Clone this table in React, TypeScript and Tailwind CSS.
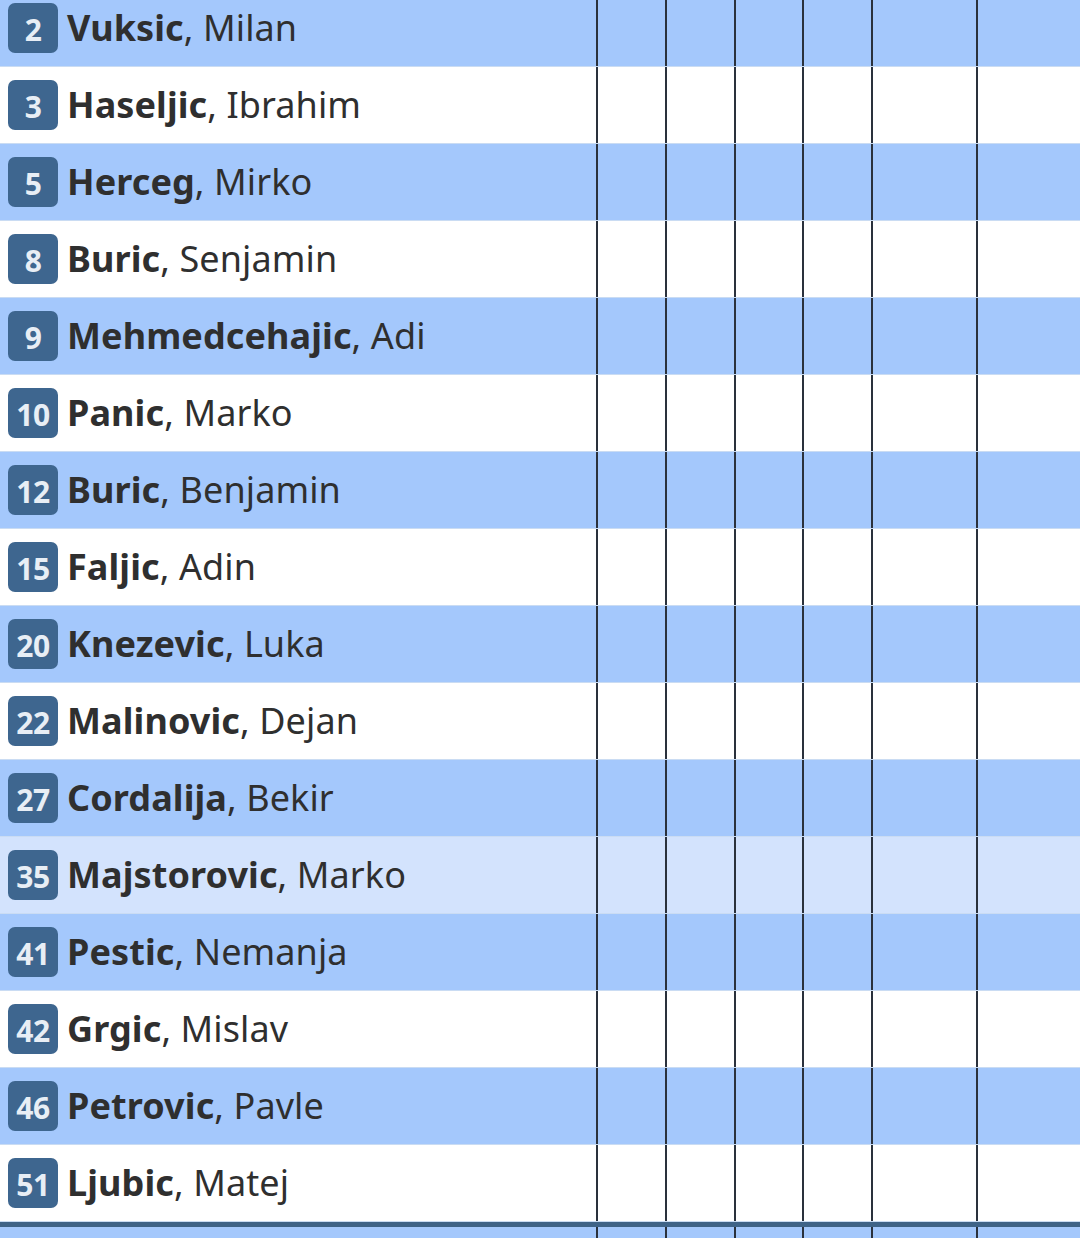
const players = [
  { no: 2, last: "Vuksic", first: "Milan" },
  { no: 3, last: "Haseljic", first: "Ibrahim" },
  { no: 5, last: "Herceg", first: "Mirko" },
  { no: 8, last: "Buric", first: "Senjamin" },
  { no: 9, last: "Mehmedcehajic", first: "Adi" },
  { no: 10, last: "Panic", first: "Marko" },
  { no: 12, last: "Buric", first: "Benjamin" },
  { no: 15, last: "Faljic", first: "Adin" },
  { no: 20, last: "Knezevic", first: "Luka" },
  { no: 22, last: "Malinovic", first: "Dejan" },
  { no: 27, last: "Cordalija", first: "Bekir" },
  { no: 35, last: "Majstorovic", first: "Marko", highlight: true },
  { no: 41, last: "Pestic", first: "Nemanja" },
  { no: 42, last: "Grgic", first: "Mislav" },
  { no: 46, last: "Petrovic", first: "Pavle" },
  { no: 51, last: "Ljubic", first: "Matej" },
];

function Cells() {
  return (
    <>
      <div className="w-[69px] shrink-0 border-l-2 border-[#2a313c]" />
      <div className="w-[69px] shrink-0 border-l-2 border-[#2a313c]" />
      <div className="w-[68px] shrink-0 border-l-2 border-[#2a313c]" />
      <div className="w-[69px] shrink-0 border-l-2 border-[#2a313c]" />
      <div className="w-[105px] shrink-0 border-l-2 border-[#2a313c]" />
      <div className="flex-1 border-l-2 border-[#2a313c]" />
    </>
  );
}

export default function App() {
  return (
    <div className="h-[1238px] w-[1080px] overflow-hidden bg-white font-['Noto_Sans',sans-serif] text-[#2f2f2f]">
      <div className="mt-[-10px] flex flex-col">
        {players.map((p, i) => {
          const bg = p.highlight ? "bg-[#d3e3fd]" : i % 2 === 0 ? "bg-[#a4c8fc]" : "bg-white";
          return (
            <div key={p.no} className={`flex h-[77px] border-b border-[#cadcf3] ${bg}`}>
              <div className="flex w-[596px] shrink-0 items-center gap-[9px] pl-2">
                <div className="flex h-[50px] w-[50px] items-center justify-center rounded-[7px] bg-[#3e668f] pt-[3px] text-[30px] leading-none font-bold tracking-[-0.5px] text-[#e8eef5]">
                  {p.no}
                </div>
                <div className="text-[36px] leading-none tracking-[0.1px]">
                  <span className="font-bold">{p.last}</span>, {p.first}
                </div>
              </div>
              <Cells />
            </div>
          );
        })}
        <div className="flex h-[40px] border-t-[5px] border-[#3f6387] bg-[#a4c8fc]">
          <div className="w-[596px] shrink-0" />
          <Cells />
        </div>
      </div>
    </div>
  );
}
